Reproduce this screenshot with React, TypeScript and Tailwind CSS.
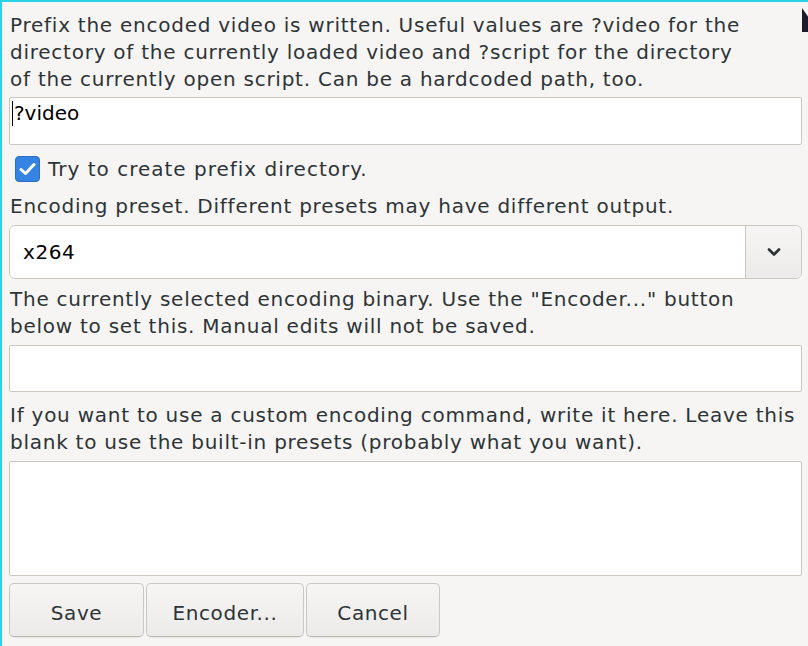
import { ChevronDown } from "lucide-react"

const font = { fontFamily: '"DejaVu Sans", sans-serif' }

function Label({ lines }: { lines: string[] }) {
  return (
    <div className="px-px text-[20px] leading-[27px] tracking-[0.75px] text-[#2e3436]">
      {lines.map(l => (
        <div key={l} className="whitespace-nowrap">{l}</div>
      ))}
    </div>
  )
}

function Button({ children, w }: { children: string; w: string }) {
  return (
    <button
      className={`${w} h-[54px] pt-[5px] rounded-[5px] border border-[#cdc7c2] border-b-[#bfb8b1] bg-gradient-to-b from-[#f6f5f4] to-[#edebe9] text-[20px] tracking-[0.6px] text-[#2e3436] shadow-[0_1px_0_rgba(0,0,0,0.05)]`}
    >
      {children}
    </button>
  )
}

export default function App() {
  return (
    <div
      className="relative w-[808px] h-[646px] overflow-hidden bg-[#f6f5f4] border-t-2 border-l-2 border-t-[#2ad3e8] border-l-[#2ad3e8]"
      style={font}
    >
      {/* partially visible dark shape at the top right */}
      <div className="absolute right-0 top-[6px] w-[6px] h-[24px] bg-[#1b1b2e] [clip-path:polygon(0_0,100%_35%,100%_100%,0_100%)]" />

      <div className="flex flex-col pl-[7px] pr-[6px] pt-[10px]">
        <Label
          lines={[
            "Prefix the encoded video is written. Useful values are ?video for the",
            "directory of the currently loaded video and ?script for the directory",
            "of the currently open script. Can be a hardcoded path, too.",
          ]}
        />

        <div className="mt-[4px] h-[48px] bg-white border border-[#cdc7c2] rounded-[2px] flex items-start pt-[2px] px-[2px] text-[20px] leading-[27px] text-black">
          <span className="w-px h-[25px] mt-px bg-black mr-px" />
          ?video
        </div>

        <div className="mt-[9px] h-[30px] flex items-center px-[6px] gap-[8px] text-[20px] tracking-[1px] text-[#2e3436]">
          <span className="w-[25px] h-[26px] rounded-[4px] bg-[#3584e4] border border-[#2a6fc4] flex items-center justify-center">
            <svg width="17" height="14" viewBox="0 0 17 14">
              <path d="M2 7.5 L6.5 11.5 L15 2.5" fill="none" stroke="white" strokeWidth="3" strokeLinecap="round" strokeLinejoin="round" />
            </svg>
          </span>
          Try to create prefix directory.
        </div>

        <div className="mt-[9px]">
          <Label lines={["Encoding preset. Different presets may have different output."]} />
        </div>

        <div className="mt-[5px] h-[54px] flex rounded-[6px] border border-[#cdc7c2] overflow-hidden">
          <div className="flex-1 bg-white flex items-center pl-[13px] text-[20px] tracking-[0.6px] text-black">x264</div>
          <div className="w-[56px] border-l border-[#cdc7c2] bg-gradient-to-b from-[#f6f5f4] to-[#edebe9] flex items-center justify-center">
            <ChevronDown size={20} strokeWidth={3.2} className="text-[#2e3436]" />
          </div>
        </div>

        <div className="mt-[7px]">
          <Label
            lines={[
              "The currently selected encoding binary. Use the \"Encoder...\" button",
              "below to set this. Manual edits will not be saved.",
            ]}
          />
        </div>

        <div className="mt-[5px] h-[47px] bg-white border border-[#cdc7c2] rounded-[2px]" />

        <div className="mt-[10px]">
          <Label
            lines={[
              "If you want to use a custom encoding command, write it here. Leave this",
              "blank to use the built-in presets (probably what you want).",
            ]}
          />
        </div>

        <div className="mt-[5px] h-[115px] bg-white border border-[#cdc7c2] rounded-[2px]" />

        <div className="mt-[7px] flex gap-[2px]">
          <Button w="w-[135px]">Save</Button>
          <Button w="w-[158px]">Encoder...</Button>
          <Button w="w-[134px]">Cancel</Button>
        </div>
      </div>
    </div>
  )
}
